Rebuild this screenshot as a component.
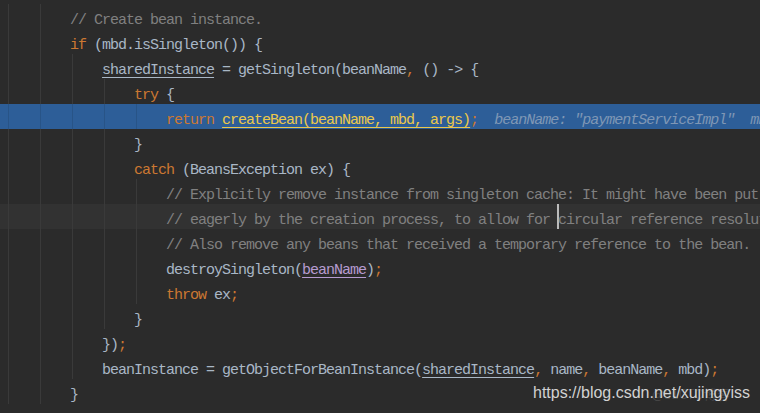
type Tok = [string, string?];

const KW = "text-[#cc7832]";
const CM = "text-[#808080]";
const OR = "text-[#cc7832]";
const UL = "underline decoration-1 underline-offset-[3px]";
const YL = "text-[#ecc84a] underline decoration-1 underline-offset-[3px]";
const PU = "text-[#b69bd0] underline decoration-1 underline-offset-[3px]";
const HINT = "italic text-[#7f97b5]";

const s = (n: number) => " ".repeat(n);

const rows: { toks: Tok[]; guides: number[]; kind?: "exec" | "caret" }[] = [
  { toks: [[s(8)], ["// Create bean instance.", CM]], guides: [0, 1] },
  { toks: [[s(8)], ["if", KW], [" (mbd.isSingleton()) {"]], guides: [0, 1] },
  {
    toks: [[s(12)], ["sharedInstance", UL], [" = getSingleton(beanName"], [",", OR], [" () -> {"]],
    guides: [0, 1, 2],
  },
  { toks: [[s(16)], ["try", KW], [" {"]], guides: [0, 1, 2, 3] },
  {
    toks: [
      [s(20)],
      ["return", KW],
      [" "],
      ["createBean(beanName, mbd, args)", YL],
      [";", OR],
      ["  "],
      ['beanName: "paymentServiceImpl"  mbd: "Root bean: class"', HINT],
    ],
    guides: [0, 1, 2, 3, 4],
    kind: "exec",
  },
  { toks: [[s(16)], ["}"]], guides: [0, 1, 2, 3] },
  { toks: [[s(16)], ["catch", KW], [" (BeansException ex) {"]], guides: [0, 1, 2, 3] },
  {
    toks: [[s(20)], ["// Explicitly remove instance from singleton cache: It might have been put there", CM]],
    guides: [0, 1, 2, 3, 4],
  },
  {
    toks: [[s(20)], ["// eagerly by the creation process, to allow for circular reference resolution.", CM]],
    guides: [0, 1, 2, 3, 4],
    kind: "caret",
  },
  {
    toks: [[s(20)], ["// Also remove any beans that received a temporary reference to the bean.", CM]],
    guides: [0, 1, 2, 3, 4],
  },
  {
    toks: [[s(20)], ["destroySingleton("], ["beanName", PU], [")"], [";", OR]],
    guides: [0, 1, 2, 3, 4],
  },
  { toks: [[s(20)], ["throw", KW], [" ex"], [";", OR]], guides: [0, 1, 2, 3, 4] },
  { toks: [[s(16)], ["}"]], guides: [0, 1, 2, 3] },
  { toks: [[s(12)], ["})"], [";", OR]], guides: [0, 1, 2] },
  {
    toks: [
      [s(12)],
      ["beanInstance = getObjectForBeanInstance("],
      ["sharedInstance", UL],
      [",", OR],
      [" name"],
      [",", OR],
      [" beanName"],
      [",", OR],
      [" mbd)"],
      [";", OR],
    ],
    guides: [0, 1, 2],
  },
  { toks: [[s(8)], ["}"]], guides: [0, 1] },
];

const guideLeft = ["left-[8px]", "left-[40px]", "left-[72px]", "left-[104px]", "left-[136px]"];

function CodeRow({ toks, guides, kind }: (typeof rows)[number]) {
  const bg = kind === "exec" ? "bg-[#2d5e98]" : kind === "caret" ? "bg-[#323232]" : "";
  const guideColor = kind === "exec" ? "bg-[#285487]" : "bg-[#3a3a3a]";
  return (
    <div className={`relative h-[25px] pl-[6px] pt-[8px] leading-[17px] whitespace-pre ${bg}`}>
      {guides.map((g) => (
        <span key={g} className={`absolute top-0 h-[25px] w-px ${guideLeft[g]} ${guideColor}`} />
      ))}
      {kind === "caret" && <span className="absolute top-0 left-[557px] h-[25px] w-[2px] bg-[#bbbbbb]" />}
      <span className="relative">
        {toks.map(([t, c], i) => (
          <span key={i} className={c}>
            {t}
          </span>
        ))}
      </span>
    </div>
  );
}

export default function App() {
  return (
    <div className="relative w-[760px] h-[413px] overflow-hidden bg-[#2b2b2b] pt-[4px] font-['Liberation_Mono',monospace] text-[15px] tracking-[-1px] text-[#a9b7c6]">
      {rows.map((r, i) => (
        <CodeRow key={i} {...r} />
      ))}
      {/* watermark */}
      <div className="absolute left-[652px] top-[387px] font-['Noto_Sans_CJK_SC',sans-serif] text-[13px] leading-none tracking-normal text-white/15">
        @51CTO博客
      </div>
      <div className="absolute right-[10px] top-[385px] font-['Liberation_Sans',sans-serif] text-[16px] leading-none tracking-normal text-[#d2d2d2]">
        https://blog.csdn.net/xujingyiss
      </div>
    </div>
  );
}
